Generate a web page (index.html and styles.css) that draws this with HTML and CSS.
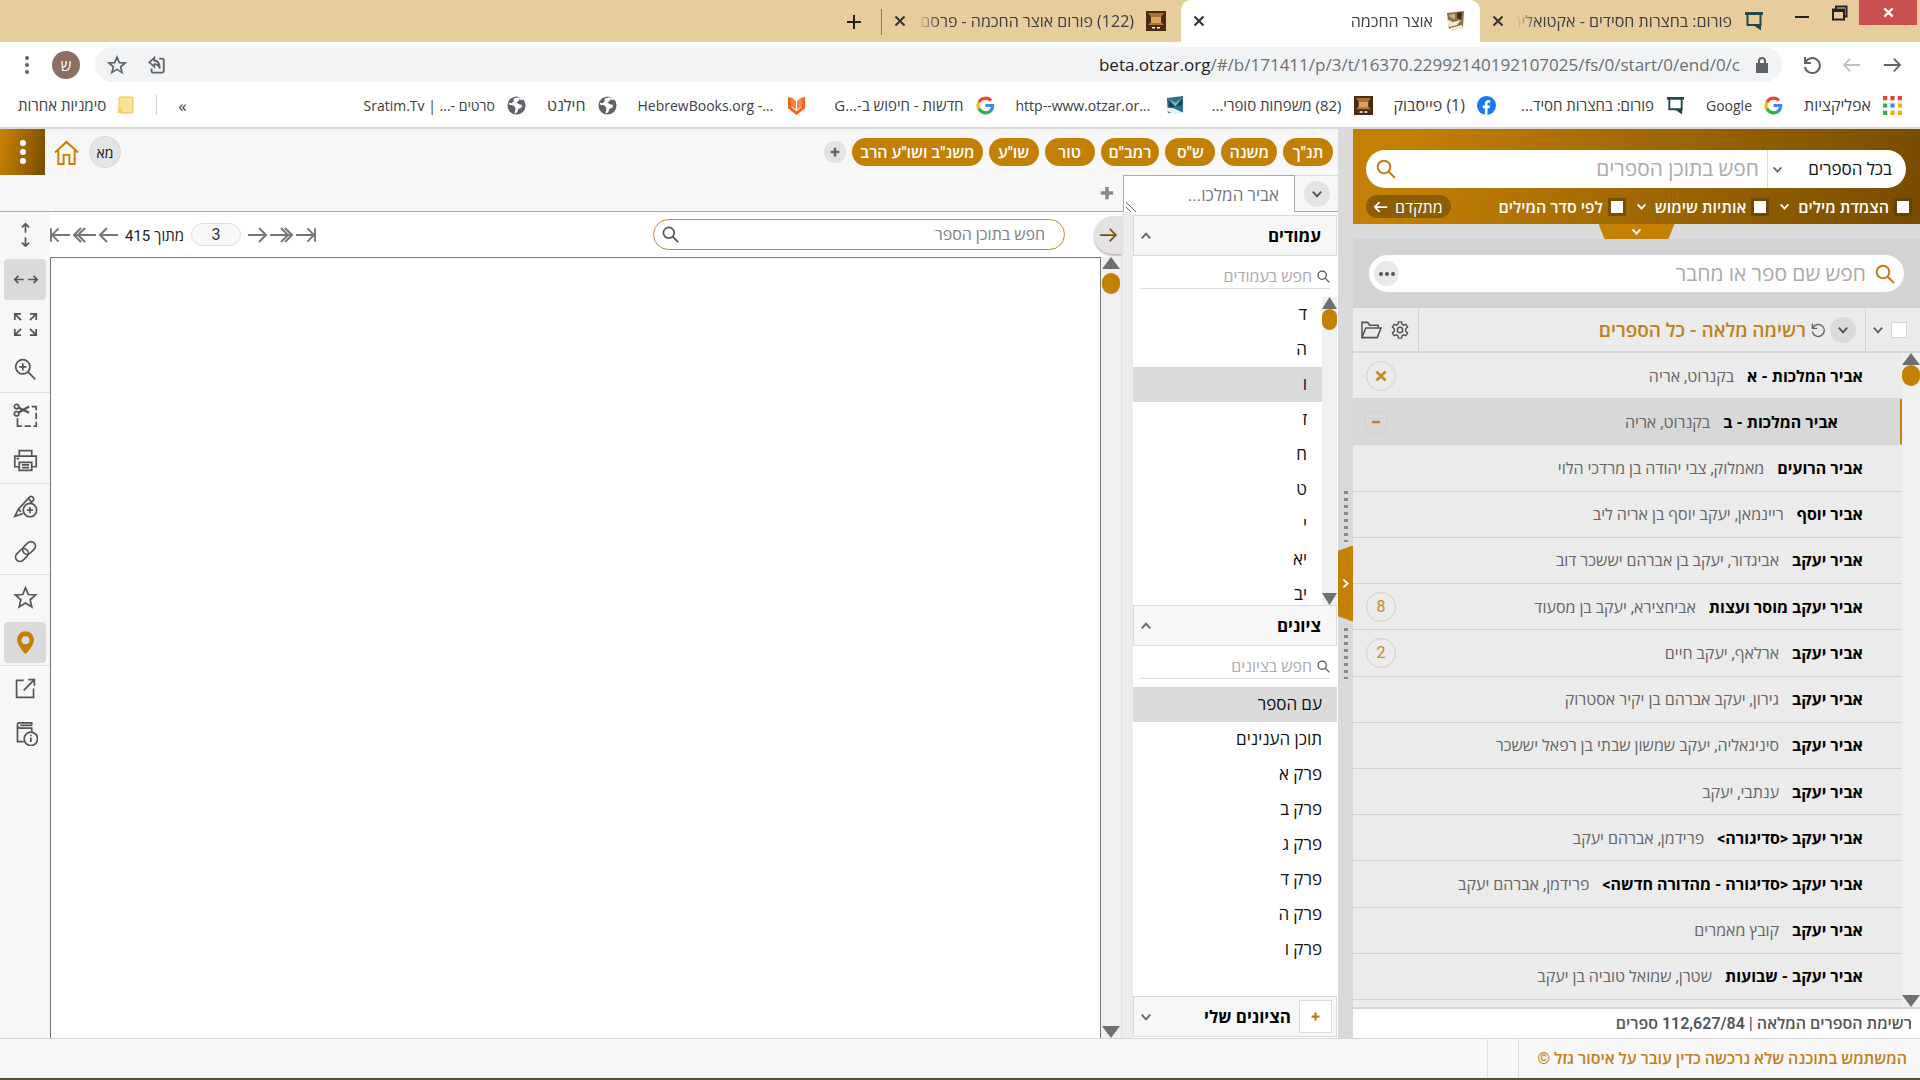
FILE: index.html
```html
<!DOCTYPE html>
<html dir="rtl" lang="he">
<head>
<meta charset="utf-8">
<title>אוצר החכמה</title>
<link rel="stylesheet" href="styles.css">
</head>
<body>
<svg class="defs" aria-hidden="true">
  <symbol id="chev" viewBox="0 0 10 10"><path d="M1.500 3l3.500 4 3.500-4"/></symbol>
  <symbol id="search" viewBox="0 0 20 20"><circle cx="8" cy="8" r="6.300"/><path d="M12.500 12.500l6.500 6.500"/></symbol>
  <symbol id="x" viewBox="0 0 12 12"><path d="M1.500 1.500l9 9M10.500 1.500l-9 9"/></symbol>
  <symbol id="plus" viewBox="0 0 16 16"><path d="M8 1v14M1 8h14"/></symbol>
  <symbol id="arrow" viewBox="0 0 20 16"><path d="M1 8h18M12 1l7 7-7 7"/></symbol>
  <symbol id="arrow2" viewBox="0 0 24 16"><path d="M1 8h22M12 1l7 7-7 7M16 1l7 7-7 7"/></symbol>
  <symbol id="arrowend" viewBox="0 0 22 16"><path d="M1 8h19M13 1l7 7-7 7M21 1v14"/></symbol>
  <symbol id="reload" viewBox="0 0 20 20"><path d="M3 2v6h6M3.500 7.500A7.500 7.500 0 1 1 3 12"/></symbol>
  <symbol id="star" viewBox="0 0 24 24"><path d="M12 2.500l2.700 6.600 7.100.5-5.400 4.600 1.700 6.900L12 17.300l-6.100 3.800 1.700-6.900L2.200 9.600l7.100-.5z"/></symbol>
  <symbol id="chat" viewBox="0 0 20 20"><path fill="none" stroke="#24484a" stroke-width="2" d="M3.500 2v12h13V2"/><path fill="#24484a" stroke="none" d="M1 1h18v3H1zM9 14h8v5.500z"/></symbol>
  <symbol id="wood" viewBox="0 0 20 20"><g stroke="none"><path fill="#4a2a14" d="M0 0h20v20H0z"/><path fill="#a8713a" d="M2 2h16l-3 4H5zM2 14l3-3h10l3 3z"/><path fill="#d9a35c" d="M5 6h10v6H5z"/><path fill="#fff" d="M6 16h3v1.500H6zM11 16h3v1.500h-3z"/></g></symbol>
  <symbol id="book" viewBox="0 0 20 20"><g stroke="none"><path fill="#8c7448" d="M2 2l17-2-1 17-14 1z"/><path fill="#3c2c18" d="M12 2l5-1-1 8-4-2z"/><path fill="#c9b88c" d="M4 4l6-1v5l-5-2z"/><path fill="#f3ead2" d="M1 8l7 3 8-2-4 5-8 2zM5 17l12-3 1 3-11 3z"/></g></symbol>
  <symbol id="bluebook" viewBox="0 0 20 20"><g stroke="none"><path fill="#2d7089" d="M2 2l17-2v17L3 18z"/><path fill="#17475c" d="M4 3l7 6 7-6v7L4 12z"/><path fill="#7fb4c6" d="M3 3l8 4 7-5-7 9z"/><path fill="#e9f2f4" d="M1 12l8 1 9 4-7 3-10-5z"/></g></symbol>
  <symbol id="google" viewBox="0 0 18 18"><path fill="none" stroke="#ea4335" stroke-width="3" d="M14.200 4.200A7 7 0 0 0 2.800 6"/><path fill="none" stroke="#fbbc05" stroke-width="3" d="M2.800 5.800a7 7 0 0 0 0 6.400"/><path fill="none" stroke="#34a853" stroke-width="3" d="M2.800 12a7 7 0 0 0 10.700 2.400"/><path fill="none" stroke="#4285f4" stroke-width="3" d="M9 9h6.800c0 2.500-.8 4.200-2.500 5.600"/></symbol>
  <symbol id="globe" viewBox="0 0 20 20"><circle cx="10" cy="10" r="9.500" fill="#5f6368"/><path fill="#fff" d="M2 9l5 1 2 3-1 5 1 .5 2-2 1-3 3-1 1-3-4-1-2-2 2-1 1-2 3 1 1-1-3-2-3 0-4 1v3l-2 2-3-.5z"/></symbol>
</svg>

<header class="browser">
  <div class="tabstrip">
    <div class="wincontrols">
      <button class="win close" aria-label="סגור"><svg><use href="#x"/></svg></button>
      <button class="win" aria-label="שחזר"><svg viewBox="0 0 16 16"><path d="M1 4.500h11v10H1zM1 6h11M4 4V1.500h10.500v10H12"/></svg></button>
      <button class="win" aria-label="מזער"><svg viewBox="0 0 16 16"><path d="M1 12h14"/></svg></button>
    </div>
    <div class="tab"><svg class="fav"><use href="#chat"/></svg><span class="label">פורום: בחצרות חסידים - אקטואליה</span><button class="tabx" aria-label="סגור כרטיסייה"><svg><use href="#x"/></svg></button></div>
    <div class="tab active"><svg class="fav"><use href="#book"/></svg><span class="label">אוצר החכמה</span><button class="tabx" aria-label="סגור כרטיסייה"><svg><use href="#x"/></svg></button></div>
    <div class="tab"><svg class="fav"><use href="#wood"/></svg><span class="label">(122) פורום אוצר החכמה - פרסם</span><button class="tabx" aria-label="סגור כרטיסייה"><svg><use href="#x"/></svg></button></div>
    <button class="newtab" aria-label="כרטיסייה חדשה"><svg><use href="#plus"/></svg></button>
  </div>
  <div class="navrow">
    <button class="nb" aria-label="הקודם"><svg class="i18"><use href="#arrow"/></svg></button>
    <button class="nb dim" aria-label="הבא"><svg class="i18 flip"><use href="#arrow"/></svg></button>
    <button class="nb" aria-label="רענון"><svg class="i20"><use href="#reload"/></svg></button>
    <div class="address">
      <svg class="lock" viewBox="0 0 12 16"><path fill="#5f6368" stroke="none" d="M0 6h12v10H0z"/><path d="M3 7V4a3 3 0 0 1 6 0v3"/></svg>
      <span class="url" dir="ltr"><b>beta.otzar.org</b>/#/b/171411/p/3/t/16370.22992140192107025/fs/0/start/0/end/0/c</span>
      <button class="nb share" aria-label="שיתוף"><svg class="i18" viewBox="0 0 20 20"><path d="M4 14v3q0 1.500 1.500 1.500h10q2 0 2-2V5q0-2-2-2h-3M7 2L1.500 7 7 12V9q5 0 6 5 0-9-6-9z"/></svg></button>
      <button class="nb" aria-label="סימנייה"><svg class="i20"><use href="#star"/></svg></button>
    </div>
    <span class="avatar">ש</span>
    <button class="nb menu" aria-label="תפריט"><svg viewBox="0 0 4 18"><g fill="#5f6368" stroke="none"><circle cx="2" cy="2" r="2"/><circle cx="2" cy="9" r="2"/><circle cx="2" cy="16" r="2"/></g></svg></button>
  </div>
  <nav class="bookmarks">
    <a href="#"><svg class="ic" viewBox="0 0 18 18"><path fill="#ea4335" d="M0 0h4v4H0zM7 0h4v4H7zM14 0h4v4h-4z"/><path fill="#34a853" d="M0 7h4v4H0zM0 14h4v4H0z"/><path fill="#4285f4" d="M7 7h4v4H7z"/><path fill="#f9ab00" d="M14 7h4v4h-4zM7 14h4v4H7zM14 14h4v4h-4z"/></svg><span class="short">אפליקציות</span></a>
    <a href="#"><svg class="ic"><use href="#google"/></svg><span class="latin">Google</span></a>
    <a href="#"><svg class="ic"><use href="#chat"/></svg><span class="long">פורום: בחצרות חסיד...</span></a>
    <a href="#"><svg class="ic" viewBox="0 0 20 20"><circle cx="10" cy="10" r="10" fill="#1877f2"/><path fill="#fff" d="M8.300 20v-7H6v-3h2.300V8c0-2.500 1.400-3.800 3.600-3.800l2 .2V7h-1.300c-1.200 0-1.500.7-1.500 1.400V10h2.700l-.5 3h-2.200v7z"/></svg><span class="short">(1) פייסבוק</span></a>
    <a href="#"><svg class="ic"><use href="#wood"/></svg><span class="long">(82) משפחות סופרי...</span></a>
    <a href="#"><svg class="ic"><use href="#bluebook"/></svg><span class="long latin" dir="ltr">http--www.otzar.or...</span></a>
    <a href="#"><svg class="ic"><use href="#google"/></svg><span class="long">חדשות - חיפוש ב-...G</span></a>
    <a href="#"><svg class="ic" viewBox="0 0 20 20"><path fill="#f26322" d="M1 1l4 1v10l5 4 5-4V2l4-1v12L10 20 1 13z"/><path fill="#f58a4e" d="M5 1l5 5 5-5v10l-5 4-5-4z"/><path stroke="#fff" d="M10 5v10"/></svg><span class="long latin" dir="ltr">HebrewBooks.org -...</span></a>
    <a href="#"><svg class="ic"><use href="#globe"/></svg><span class="short">חילנט</span></a>
    <a href="#"><svg class="ic"><use href="#globe"/></svg><span class="long latin">סרטים -... | Sratim.Tv</span></a>
    <button class="more" aria-label="עוד סימניות">»</button>
    <a href="#" class="other"><svg class="folder" viewBox="0 0 16 18"><rect x="1" y="1" width="14" height="16" rx="1" fill="#fde293" stroke="#e9c54e"/><path fill="#f5d061" stroke="none" d="M0 12h4v5H0z"/></svg><span>סימניות אחרות</span></a>
  </nav>
</header>

<div class="app">
  <section class="library">
    <div class="head">
      <div class="pill">
        <select aria-label="היקף החיפוש"><option>בכל הספרים</option></select>
        <svg class="i10 grey"><use href="#chev"/></svg>
        <input type="text" placeholder="חפש בתוכן הספרים" aria-label="חפש בתוכן הספרים">
        <svg class="mag gold"><use href="#search"/></svg>
      </div>
      <div class="opts">
        <label><input type="checkbox">הצמדת מילים</label><svg class="i10"><use href="#chev"/></svg>
        <label><input type="checkbox">אותיות שימוש</label><svg class="i10"><use href="#chev"/></svg>
        <label><input type="checkbox">לפי סדר המילים</label>
        <button class="adv">מתקדם<svg class="flip"><use href="#arrow"/></svg></button>
      </div>
    </div>
    <div class="drop"><button aria-label="הרחב"><svg class="i10"><use href="#chev"/></svg></button></div>
    <div class="find">
      <div class="pill">
        <svg class="mag gold"><use href="#search"/></svg>
        <input type="text" placeholder="חפש שם ספר או מחבר" aria-label="חפש שם ספר או מחבר">
        <button class="dots" aria-label="אפשרויות"><i></i><i></i><i></i></button>
      </div>
    </div>
    <div class="listhead">
      <div class="pick"><input type="checkbox" aria-label="בחר הכל"><svg class="i12 grey"><use href="#chev"/></svg></div>
      <div class="name"><button class="round" aria-label="רשימות"><svg class="i12"><use href="#chev"/></svg></button><svg class="i15 grey"><use href="#reload"/></svg><h2>רשימה מלאה - כל הספרים</h2></div>
      <div class="tools">
        <svg class="gear" viewBox="0 0 20 20"><path d="M8.300 1h3.400l.6 2.600 1.800 1 2.600-.8 1.700 2.900-2 1.900v2.800l2 1.900-1.700 2.900-2.600-.8-1.800 1-.6 2.600H8.300l-.6-2.600-1.800-1-2.600.8-1.700-2.900 2-1.900V8.600l-2-1.900 1.700-2.900 2.600.8 1.800-1z"/><circle cx="10" cy="10" r="3"/></svg>
        <svg class="fold" viewBox="0 0 22 18"><path d="M1 17V1h6l2 3h9v3M1 17L5 7h16l-4 10z"/></svg>
      </div>
    </div>
    <div class="listwrap">
      <div class="vscroll"><span class="up"></span><span class="thumb"></span><span class="down"></span></div>
      <ul class="books">
        <li><b>אביר המלכות - א</b><span>בקנרוט, אריה</span><em><svg><use href="#x"/></svg></em></li>
        <li class="sel"><b>אביר המלכות - ב</b><span>בקנרוט, אריה</span><em><svg viewBox="0 0 12 12"><path d="M2 6h8"/></svg></em></li>
        <li><b>אביר הרועים</b><span>מאמלוק, צבי יהודה בן מרדכי הלוי</span></li>
        <li><b>אביר יוסף</b><span>ריינמאן, יעקב יוסף בן אריה ליב</span></li>
        <li><b>אביר יעקב</b><span>אביגדור, יעקב בן אברהם יששכר דוב</span></li>
        <li><b>אביר יעקב מוסר ועצות</b><span>אביחצירא, יעקב בן מסעוד</span><em>8</em></li>
        <li><b>אביר יעקב</b><span>ארלאף, יעקב חיים</span><em>2</em></li>
        <li><b>אביר יעקב</b><span>גירון, יעקב אברהם בן יקיר אסטרוק</span></li>
        <li><b>אביר יעקב</b><span>סיניגאליה, יעקב שמשון שבתי בן רפאל יששכר</span></li>
        <li><b>אביר יעקב</b><span>ענתבי, יעקב</span></li>
        <li><b>אביר יעקב &lt;סדיגורה&gt;</b><span>פרידמן, אברהם יעקב</span></li>
        <li><b>אביר יעקב &lt;סדיגורה - מהדורה חדשה&gt;</b><span>פרידמן, אברהם יעקב</span></li>
        <li><b>אביר יעקב</b><span>קובץ מאמרים</span></li>
        <li><b>אביר יעקב - שבועות</b><span>שטרן, שמואל טוביה בן יעקב</span></li>
      </ul>
    </div>
    <div class="status">רשימת הספרים המלאה | 112,627/84 ספרים</div>
  </section>

  <div class="splitter"><span class="beads"></span><button aria-label="הסתר"><svg class="i10 right"><use href="#chev"/></svg></button><span class="beads"></span></div>

  <main class="main">
    <div class="topbar">
      <button class="chip">תנ"ך</button><button class="chip">משנה</button><button class="chip">ש"ס</button><button class="chip">רמב"ם</button><button class="chip">טור</button><button class="chip">שו"ע</button><button class="chip">משנ"ב ושו"ע הרב</button>
      <button class="addchip" aria-label="הוסף"><svg><use href="#plus"/></svg></button>
      <span class="user">מא</span>
      <a href="#" class="home" aria-label="בית"><svg viewBox="0 0 26 26"><path d="M1 13L13 2l12 11M4.500 11v14H10v-9.500h6V25h5.500V11"/></svg></a>
      <button class="kebab" aria-label="תפריט"><i></i><i></i><i></i></button>
    </div>
    <div class="doctabs">
      <div class="ddl"><button class="round" aria-label="כרטיסיות"><svg class="i12"><use href="#chev"/></svg></button></div>
      <div class="doctab">אביר המלכו...<svg class="grip" viewBox="0 0 10 10"><path d="M0 0l10 10M0 5l5 5"/></svg></div>
      <div class="rest"><button aria-label="כרטיסייה חדשה"><svg><use href="#plus"/></svg></button></div>
    </div>
    <div class="work">
      <aside class="pages">
        <div class="sec"><h3>עמודים</h3><svg class="i12 grey up"><use href="#chev"/></svg></div>
        <div class="filter"><svg><use href="#search"/></svg><input type="text" placeholder="חפש בעמודים" aria-label="חפש בעמודים"></div>
        <div class="scrolled">
          <div class="vscroll"><span class="up"></span><span class="thumb"></span><span class="down"></span></div>
          <ul class="items"><li>ד</li><li>ה</li><li class="on">ו</li><li>ז</li><li>ח</li><li>ט</li><li>י</li><li>יא</li><li>יב</li></ul>
        </div>
        <div class="sec"><h3>ציונים</h3><svg class="i12 grey up"><use href="#chev"/></svg></div>
        <div class="filter"><svg><use href="#search"/></svg><input type="text" placeholder="חפש בציונים" aria-label="חפש בציונים"></div>
        <ul class="items marks"><li class="on">עם הספר</li><li>תוכן הענינים</li><li>פרק א</li><li>פרק ב</li><li>פרק ג</li><li>פרק ד</li><li>פרק ה</li><li>פרק ו</li></ul>
        <div class="sec mine"><button aria-label="הוסף ציון"><svg><use href="#plus"/></svg></button><h3>הציונים שלי</h3><svg class="i12 grey"><use href="#chev"/></svg></div>
      </aside>
      <div class="viewer">
        <div class="vbar">
          <button class="pull" aria-label="הסתר לוח"><svg><use href="#arrow"/></svg></button>
          <div class="vsearch"><input type="text" placeholder="חפש בתוכן הספר" aria-label="חפש בתוכן הספר"><svg><use href="#search"/></svg></div>
          <div class="pager" dir="ltr">
            <button aria-label="עמוד אחרון"><svg class="w22 flip"><use href="#arrowend"/></svg></button>
            <button aria-label="קפיצה קדימה"><svg class="w24 flip"><use href="#arrow2"/></svg></button>
            <button aria-label="עמוד הבא"><svg class="w20 flip"><use href="#arrow"/></svg></button>
            <label for="pg" dir="rtl">מתוך 415</label>
            <input id="pg" type="text" value="3">
            <button aria-label="עמוד קודם"><svg class="w20"><use href="#arrow"/></svg></button>
            <button aria-label="קפיצה אחורה"><svg class="w24"><use href="#arrow2"/></svg></button>
            <button aria-label="עמוד ראשון"><svg class="w22"><use href="#arrowend"/></svg></button>
          </div>
        </div>
        <div class="canvas"><div class="vscroll"><span class="up"></span><span class="thumb"></span><span class="down"></span></div><div class="page"></div></div>
      </div>
      <div class="toolcol">
        <div class="grp">
          <button aria-label="התאם לגובה"><svg viewBox="0 0 28 28"><path d="M14 12V2M10 6l4-4 4 4M14 17v10M10 23l4 4 4-4"/></svg></button>
          <button class="on" aria-label="התאם לרוחב"><svg viewBox="0 0 28 28"><path d="M12 14H2M6 10l-4 4 4 4M17 14h10M23 10l4 4-4 4"/></svg></button>
          <button aria-label="מסך מלא"><svg viewBox="0 0 28 28"><path d="M2 9V2h7M2 2l7 7M26 9V2h-7M26 2l-7 7M2 19v7h7M2 26l7-7M26 19v7h-7M26 26l-7-7"/></svg></button>
          <button aria-label="הגדל"><svg viewBox="0 0 28 28"><circle cx="11" cy="11" r="8"/><path d="M17 17l8 8M11 7v8M7 11h8"/></svg></button>
        </div>
        <div class="grp">
          <button aria-label="גזור"><svg viewBox="0 0 28 28"><circle cx="4" cy="4" r="2.500"/><circle cx="4" cy="12" r="2.500"/><path stroke-width="2.600" d="M6 5l12 6M6 11l12-7"/><path d="M5 17v9h5M13 26h7M23 26h3v-5M26 18v-7M26 8V4h-5"/></svg></button>
          <button aria-label="הדפס"><svg viewBox="0 0 28 28"><path d="M7 9V3h14v6M6 21H2V9h24v12h-4M7 16h14v9H7zM10 19h8M10 22h8M4 12h3"/></svg></button>
        </div>
        <div class="grp">
          <button aria-label="הוסף הערה"><svg viewBox="0 0 28 28"><circle cx="19" cy="18" r="7.500"/><path d="M19 14.500v7M15.500 18h7M11 22l-9 3 4-8L19 3q2-1 3.500 1t0 3.500l-3 3M6 17l3 3M17 5l4 4"/></svg></button>
          <button aria-label="קישור"><svg viewBox="0 0 28 28"><rect x="13" y="2" width="10" height="16" rx="5" transform="rotate(45 18 10)"/><rect x="5" y="10" width="10" height="16" rx="5" transform="rotate(45 10 18)"/></svg></button>
        </div>
        <div class="grp">
          <button aria-label="מועדפים"><svg class="fav-star"><use href="#star"/></svg></button>
          <button class="on pin" aria-label="ציון"><svg viewBox="0 0 28 28"><path d="M14 1.500a9.500 9.500 0 0 0-9.500 9.500C4.500 18 14 27 14 27s9.500-9 9.500-16A9.500 9.500 0 0 0 14 1.500zm0 5.500a4.500 4.500 0 1 1 0 9 4.500 4.500 0 0 1 0-9z"/></svg></button>
        </div>
        <div class="grp">
          <button aria-label="פתח בחלון חדש"><svg viewBox="0 0 28 28"><path d="M12 5H4v19h19V14M12 16L24 4M17 4h7v7"/></svg></button>
          <button aria-label="פרטי הספר"><svg viewBox="0 0 28 28"><circle cx="20" cy="20" r="7.500"/><path d="M20 18.500v5M20 15.500v1.500M12 23H5V4q0-2 2-2h14v3M5 5q0 3 3 3h13v4M8 5h13"/></svg></button>
        </div>
      </div>
    </div>
  </main>
</div>
<footer class="foot"><p>המשתמש בתוכנה שלא נרכשה כדין עובר על איסור גזל ©</p><span></span></footer>
</body>
</html>
```
FILE: styles.css
```css
:root{--gold:#c48004;--line:#dadada}
*{box-sizing:border-box}
body{margin:0;height:100vh;display:flex;flex-direction:column;background:#f7f7f7;font-family:Roboto,"Open Sans",sans-serif;font-size:17px;color:#111;overflow:hidden}
button,input,select{font:inherit;color:inherit;border:0;background:none;padding:0;margin:0;min-width:0}
input:focus{outline:none}
ul,h2,h3,p{margin:0;padding:0;list-style:none}
svg{display:block;fill:none;stroke:currentColor;flex:none}
i,em{font-style:normal}
.defs{position:absolute;width:0;height:0}
.flip{transform:scaleX(-1)}
.up.grey{transform:scaleY(-1)}
.right{transform:rotate(-90deg)}
.i10{width:11px;height:11px;stroke-width:1.600}
.i12{width:12px;height:12px;stroke-width:1.600}
.i15{width:16px;height:16px;stroke-width:1.800}
.i18{width:18px;height:18px;stroke-width:2}
.i20{width:20px;height:20px;stroke-width:2}
.grey{color:#666}
.gold{color:#c07f1a}

/* browser frame */
.browser{font-family:"Open Sans",sans-serif;flex:none;background:#fff;border-bottom:2px solid var(--line);color:#3c4043;font-size:16px}
.tabstrip{height:42px;background:#e8cd9c;display:flex;align-items:stretch}
.wincontrols{display:flex;align-items:flex-start;width:141px;padding-right:3px;color:#222}
.win{width:38px;height:25px;display:grid;place-items:center}
.win svg{width:16px;height:16px;stroke-width:2}
.win.close{width:58px;background:#c85050;color:#fff}
.win.close svg{width:11px;height:11px;stroke-width:2.500}
.tab{width:299px;display:flex;align-items:center;gap:12px;padding:0 15px 0 12px}
.tab.active{background:#fff;border-radius:10px 10px 0 0}
.fav{width:20px;height:20px}
.label{flex:1;white-space:nowrap;overflow:hidden;font-size:16px;mask-image:linear-gradient(to left,#000 90%,transparent)}
.tabx{width:12px;height:42px;display:grid;place-items:center;color:#333}
.tabx svg{width:12px;height:12px;stroke-width:2}
.newtab{display:grid;place-items:center;width:56px;border-right:1px solid #8d7a55;height:26px;margin-top:9px;color:#222}
.newtab svg{width:16px;height:16px;stroke-width:2}
.navrow{height:45px;display:flex;align-items:center;gap:20px;padding:0 18px 0 22px}
.nb{display:grid;place-items:center;width:20px;color:#5f6368}
.nb.dim{color:#bdc1c6}
.menu{width:10px}
.menu svg{width:4px;height:18px}
.address{flex:1;height:35px;border-radius:18px;background:#f1f3f4;display:flex;align-items:center;gap:20px;padding:0 14px 0 12px}
.lock{width:12px;height:16px;stroke:#5f6368;stroke-width:2}
.url{font-size:17px;color:#6b6f73;margin-right:-4px}
.url b{font-weight:400;color:#202124}
.share{margin-right:auto}
.avatar{width:28px;height:28px;margin-right:-5px;border-radius:50%;background:#8d6e63;color:#fff;display:grid;place-items:center;font-size:15px}
.bookmarks{height:40px;display:flex;align-items:center;gap:21px;padding:0 18px 4px;white-space:nowrap;font-size:15px}
.bookmarks a{display:flex;align-items:center;gap:12px;color:inherit;text-decoration:none}
.ic{width:19px;height:19px;stroke:none}
.bookmarks .short{font-size:16px}
.bookmarks .latin{font-size:14px}
.bookmarks .long{width:137px}
.more{margin-right:auto;font-size:17px}
.other{padding-right:22px;border-right:1px solid #ccc}
.folder{width:16px;height:18px}

/* app frame */
.app{flex:1;min-height:0;display:grid;grid-template-columns:567px 15px 1fr}
.library{display:flex;flex-direction:column;min-height:0;background:#ebebeb}
.head{height:95px;background:linear-gradient(100deg,#c48004 8%,#774c00);padding:21px 14px 0 13px}
.pill{background:#fff;border-radius:19px;display:flex;align-items:center;height:38px}
.pill input{flex:1;font-size:21px;height:100%}
.pill input::placeholder{color:#aaa;opacity:1}
.head select{appearance:none;width:105px;margin:0 14px 0 4px}
.head .pill input{border-right:1px solid #ddd;padding-right:8px;margin-right:4px}
.mag{width:20px;height:20px;stroke-width:2;margin:0 10px}
.opts{display:flex;align-items:center;gap:8px;padding-top:7px;margin-right:-6px;color:#fff;font-weight:600;font-size:16px}
.opts label{display:flex;align-items:center;gap:5px;white-space:nowrap}
.opts input{appearance:none;width:18px;height:18px;border:3px solid rgba(90,60,10,.6);background:#fff;background-clip:padding-box}
.opts .i10{margin-left:2px}
.adv{margin-right:auto;height:23px;border-radius:12px;background:#8d5c06;padding:0 8px;display:flex;align-items:center;gap:7px;font-size:16px;font-weight:500}
.adv svg{width:14px;height:12px;stroke-width:2.500}
.drop{height:15px;background:var(--line);display:flex;justify-content:center}
.drop button{width:76px;background:var(--gold);color:#fff;clip-path:polygon(0 0,100% 0,92% 100%,8% 100%);display:grid;place-items:center}
.find{height:69px;background:#d3d3d3;padding:16px 16px 0}
.find .pill{height:37px}
.find .mag{margin:0 9px}
.dots{width:25px;height:25px;border-radius:50%;background:#e9e9e9;display:flex;align-items:center;justify-content:center;gap:2px;margin-left:5px}
.dots i{width:4px;height:4px;border-radius:50%;background:#555}
.listhead{height:45px;display:flex;border-bottom:2px solid #d6d6d6}
.pick{width:55px;display:flex;align-items:center;gap:7px;padding-right:13px;border-left:1px solid #d2d2d2}
.pick input{appearance:none;width:16px;height:16px;background:#fff;border:1px solid #d5d5d5}
.name{flex:1;display:flex;align-items:center;gap:4px;padding-right:9px}
.round{width:26px;height:26px;border-radius:50%;background:#dadada;display:grid;place-items:center;color:#555}
.name h2{font-size:19px;font-weight:600;color:#c07f1a}
.tools{width:66px;border-right:1px solid #d2d2d2;display:flex;align-items:center;gap:9px;padding-right:9px;color:#555}
.gear{width:18px;height:18px;stroke-width:1.600}
.fold{width:21px;height:18px;stroke-width:1.600}
.listwrap{flex:1;min-height:0;display:flex}
.vscroll{width:18px;flex:none;background:#f0f0f0;display:flex;flex-direction:column;align-items:stretch}
.vscroll .up{height:12px;background:#707070;clip-path:polygon(50% 0,100% 100%,0 100%)}
.vscroll .thumb{height:21px;border-radius:9px;background:var(--gold)}
.vscroll .down{height:12px;background:#707070;clip-path:polygon(0 0,100% 0,50% 100%);margin-top:auto}
.books{flex:1;display:flex;flex-direction:column;padding-bottom:7px}
.books li{flex:1 1 0;min-height:0;display:flex;align-items:center;gap:13px;padding:0 39px 0 13px;border-bottom:1px solid #d2d2d2;white-space:nowrap}
.books b{font-weight:700;font-size:16px;color:#000}
.books span{font-size:16px;color:#666}
.books em{margin-right:auto;width:30px;height:30px;border:1px solid #ddcdb8;border-radius:50%;color:#c98a20;display:grid;place-items:center;font-size:16px}
.books em svg{width:12px;height:12px;stroke-width:2.500}
.books .sel{background:#d8d8d8;border-right:2px solid var(--gold);padding-right:62px;padding-left:11px}
.books .sel em{width:24px;height:24px}
.status{height:31px;border-top:2px solid #d6d6d6;background:#fff;color:#555;font-weight:600;font-size:16px;line-height:29px;padding-right:8px}

.splitter{background:var(--line);display:flex;flex-direction:column;align-items:center;justify-content:center;gap:4px}
.splitter button{width:15px;height:76px;background:var(--gold);color:#fff;clip-path:polygon(0 7%,100% 0,100% 100%,0 93%);display:grid;place-items:center}
.beads{width:4px;height:53px;background:radial-gradient(circle,#888 2px,transparent 2px) 0 0/4px 7px}

.main{min-width:0;min-height:0;display:flex;flex-direction:column;background:#f7f7f7}
.topbar{height:46px;display:flex;align-items:center;gap:6px;padding-right:5px}
.chip{height:28px;min-width:50px;border-radius:14px;background:var(--gold);color:#fff;padding:0 8px;font-weight:600;font-size:16px;white-space:nowrap}
.addchip{width:22px;height:22px;border-radius:50%;background:#e3e3e3;display:grid;place-items:center;color:#666}
.addchip svg{width:10px;height:10px;stroke-width:4}
.user{margin-right:auto;width:32px;height:32px;border-radius:50%;background:#e4e4e4;border:1px solid #dadada;display:grid;place-items:center;font-size:14px}
.home{color:var(--gold);margin:0 4px 0 3px}
.home svg{width:25px;height:25px;stroke-width:2}
.kebab{width:45px;height:46px;background:linear-gradient(100deg,#c48004 8%,#774c00);display:flex;flex-direction:column;align-items:center;justify-content:center;gap:3px}
.kebab i{width:6px;height:6px;border-radius:50%;background:#fff}
.doctabs{height:37px;display:flex}
.ddl{width:43px;border-top:1px solid #ddd;border-bottom:1px solid #aaa;display:grid;place-items:center}
.ddl .round{background:#e4e4e4}
.doctab{width:172px;background:#fff;border:1px solid #aaa;border-bottom:0;display:flex;align-items:center;padding-right:15px;font-size:17px;color:#777;position:relative}
.grip{position:absolute;left:2px;bottom:0;width:10px;height:10px;color:#666;stroke-width:1}
.rest{flex:1;border-bottom:1px solid #aaa;padding:9px 9px 0}
.rest svg{width:14px;height:14px;stroke-width:4;color:#888}
.work{flex:1;min-height:0;display:flex;background:#fff}
.pages{width:205px;display:flex;flex-direction:column;padding:3px 0 1px}
.sec{height:41px;flex:none;background:#f7f7f7;border:1px solid var(--line);display:flex;align-items:center;justify-content:space-between;padding:0 15px 0 6px;margin-right:1px}
.sec h3{font-size:17px;font-weight:700;color:#000}
.filter{height:33px;flex:none;margin:0 8px 8px 7px;border-bottom:1px solid #ddd;display:flex;align-items:center;gap:5px;padding-top:8px}
.filter svg{width:13px;height:13px;stroke-width:2;color:#555}
.filter input{flex:1;font-size:16px}
.filter input::placeholder,.vsearch input::placeholder{color:#aaa;opacity:1}
.scrolled{flex:1;min-height:0;display:flex;overflow:hidden}
.scrolled .vscroll{width:15px;margin-right:1px}
.items{flex:1;min-height:0}
.items li{height:35px;line-height:35px;padding-right:15px;font-size:17px}
.items .on{background:#dadada}
.marks{flex:none;height:309px;margin-right:1px}
.mine{justify-content:flex-start;padding-right:4px;gap:8px}
.mine button{width:33px;height:33px;background:#fff;border:1px solid #ddd;display:grid;place-items:center;color:#c07f1a}
.mine button svg{width:9px;height:9px;stroke-width:4}
.mine .i12{margin-right:auto}
.viewer{flex:1;min-width:0;display:flex;flex-direction:column;border-right:11px solid #ececec}
.vbar{height:45px;display:flex;align-items:center}
.pull{width:28px;height:38px;background:#e4e2e2;border-radius:0 20px 20px 0;transform:scaleX(-1);box-shadow:0 2px 2px #bbb;display:grid;place-items:center;color:#7d5205}
.pull svg{width:18px;height:14px;stroke-width:2;transform:scaleX(-1)}
.vsearch{width:412px;height:31px;border:1px solid #c48d2c;border-radius:16px;margin-right:29px;display:flex;align-items:center;padding:0 19px 0 8px}
.vsearch input{flex:1;font-size:16px}
.vsearch input::placeholder{color:#808080}
.vsearch svg{width:17px;height:17px;stroke-width:2;color:#555}
.pager{margin-right:auto;display:flex;align-items:center;gap:2px;color:#777}
.pager svg{height:16px;stroke-width:2}
.w20{width:20px}.w22{width:21px}.w24{width:24px}
.pager label{font-size:15px;color:#222;margin:0 5px 0 4px;white-space:nowrap}
.pager input{width:50px;height:23px;border:1px solid #ddd;border-radius:12px;background:#f8f8f8;text-align:center;font-size:16px;color:#333;margin-right:4px}
.canvas{flex:1;min-height:0;display:flex}
.canvas .vscroll{width:21px;padding:0 1px;border-right:1px solid #e0e0e0}
.canvas .thumb{margin-top:4px}
.page{flex:1;border:1px solid #777;border-bottom:0}
.toolcol{width:50px;background:#f7f7f7}
.grp{border-bottom:1px solid #ddd;display:flex;flex-direction:column}
.grp:last-child{border:0}
.grp button{width:42px;height:41px;margin:2px 4px;border-radius:4px;display:grid;place-items:center;color:#555}
.grp .on{background:#dadada}
.grp svg{width:25px;height:25px;stroke-width:1.900}
.grp .fav-star{stroke-width:1.600}
.grp .pin svg{fill:var(--gold);stroke:none}
.foot{height:42px;flex:none;border-top:1px solid #d6d6d6;border-bottom:2px solid #5d4e3b;background:#f7f7f7;display:flex}
.foot p{width:402px;padding-right:13px;border-left:1px solid #ddd;color:#c07f1a;font-weight:600;font-size:16px;line-height:39px;white-space:nowrap}
.foot span{width:31px;border-left:1px solid #ddd}
```
